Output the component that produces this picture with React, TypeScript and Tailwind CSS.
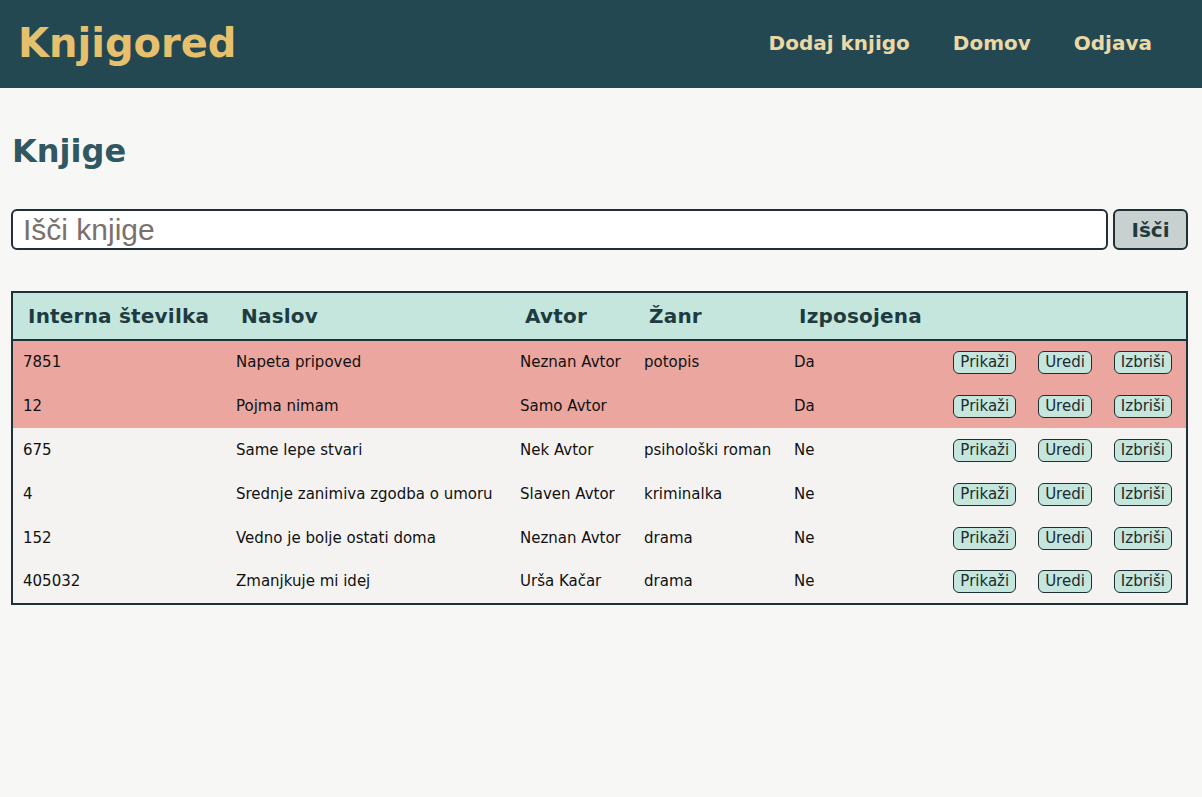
import React from "react";

type Book = {
  id: string;
  title: string;
  author: string;
  genre: string;
  borrowed: boolean;
};

const books: Book[] = [
  { id: "7851", title: "Napeta pripoved", author: "Neznan Avtor", genre: "potopis", borrowed: true },
  { id: "12", title: "Pojma nimam", author: "Samo Avtor", genre: "", borrowed: true },
  { id: "675", title: "Same lepe stvari", author: "Nek Avtor", genre: "psihološki roman", borrowed: false },
  { id: "4", title: "Srednje zanimiva zgodba o umoru", author: "Slaven Avtor", genre: "kriminalka", borrowed: false },
  { id: "152", title: "Vedno je bolje ostati doma", author: "Neznan Avtor", genre: "drama", borrowed: false },
  { id: "405032", title: "Zmanjkuje mi idej", author: "Urša Kačar", genre: "drama", borrowed: false },
];

function RowButton({ label }: { label: string }) {
  return (
    <button className="h-[23px] rounded-[6px] border border-[#1f2e30] bg-[#c4e6dd] px-[6px] text-[15px] leading-none text-[#1d2b2d]">
      {label}
    </button>
  );
}

export default function App() {
  return (
    <div className="min-h-[797px] bg-[#f7f7f6] font-['DejaVu_Sans',sans-serif] text-[#111]">
      <header className="flex h-[88px] items-center justify-between bg-[#234851] pl-[18px] pr-[50px]">
        <h1 className="pb-[3px] text-[40px] font-bold text-[#e6c06c]">Knjigored</h1>
        <nav className="flex gap-[43px] pb-[2px] text-[20px] font-bold text-[#ecd8a5]">
          <a href="#">Dodaj knjigo</a>
          <a href="#">Domov</a>
          <a href="#">Odjava</a>
        </nav>
      </header>

      <main className="pl-[11px] pr-[14px] pt-[44px]">
        <h2 className="pl-px text-[32px] font-bold leading-[38px] text-[#2f5862]">Knjige</h2>

        <form className="mt-[39px] flex gap-[5px]" onSubmit={(e) => e.preventDefault()}>
          <input
            type="text"
            placeholder="Išči knjige"
            className="h-[41px] flex-1 rounded-[6px] border-2 border-[#1e3236] bg-white px-[10px] font-['Liberation_Sans',sans-serif] text-[30px] text-[#222] outline-none placeholder:text-[#7a716d]"
          />
          <button className="h-[41px] w-[75px] rounded-[6px] border-2 border-[#1e3236] bg-[#c8d1d0] text-[20px] font-bold text-[#1d3b40]">
            Išči
          </button>
        </form>

        <table className="mt-[41px] w-full table-fixed border-collapse border-2 border-[#1d3237] text-[15px]">
          <colgroup>
            <col className="w-[214px]" />
            <col className="w-[284px]" />
            <col className="w-[124px]" />
            <col className="w-[150px]" />
            <col />
            <col className="w-[245px]" />
          </colgroup>
          <thead>
            <tr className="h-[48px] border-b-2 border-[#1d3237] bg-[#c4e6dd] text-left text-[20px] font-bold tracking-[0.2px] text-[#1d3b40]">
              <th className="pl-[15px] font-bold">Interna številka</th>
              <th className="pl-[15px] font-bold">Naslov</th>
              <th className="pl-[15px] font-bold">Avtor</th>
              <th className="pl-[15px] font-bold">Žanr</th>
              <th className="pl-[15px] font-bold">Izposojena</th>
              <th />
            </tr>
          </thead>
          <tbody>
            {books.map((b) => (
              <tr key={b.id} className={b.borrowed ? "h-[44px] bg-[#eba79f]" : "h-[44px] bg-[#f4f3f1]"}>
                <td className="pl-[10px]">{b.id}</td>
                <td className="pl-[10px]">{b.title}</td>
                <td className="pl-[10px]">{b.author}</td>
                <td className="pl-[10px]">{b.genre}</td>
                <td className="pl-[10px]">{b.borrowed ? "Da" : "Ne"}</td>
                <td className="pr-[14px]">
                  <div className="flex justify-end gap-[22px]">
                    <RowButton label="Prikaži" />
                    <RowButton label="Uredi" />
                    <RowButton label="Izbriši" />
                  </div>
                </td>
              </tr>
            ))}
          </tbody>
        </table>
      </main>
    </div>
  );
}
